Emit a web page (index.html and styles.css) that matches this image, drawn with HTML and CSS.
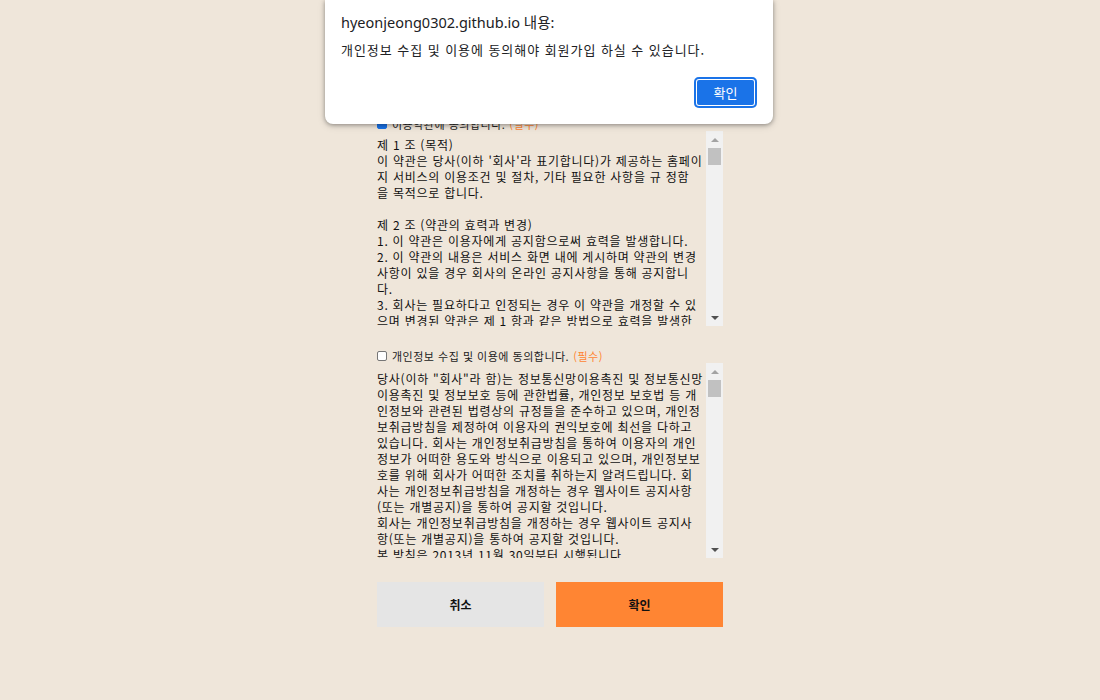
FILE: index.html
```html
<!DOCTYPE html>
<html lang="ko">
<head>
<meta charset="utf-8">
<title>회원가입 약관 동의</title>
<link rel="stylesheet" href="styles.css">
</head>
<body>
<main class="page">
  <section class="agree">
    <label class="agree-label">
      <span class="check check-on"></span>
      <span>이용약관에 동의합니다.</span>
      <span class="req">(필수)</span>
    </label>
    <div class="scroll-box">
      <div class="scroll-text scroll-text-a">제 1 조 (목적)<br>이 약관은 당사(이하 '회사'라 표기합니다)가 제공하는 홈페이<br>지 서비스의 이용조건 및 절차, 기타 필요한 사항을 규 정함<br>을 목적으로 합니다.<br><br>제 2 조 (약관의 효력과 변경)<br>1. 이 약관은 이용자에게 공지함으로써 효력을 발생합니다.<br>2. 이 약관의 내용은 서비스 화면 내에 게시하며 약관의 변경<br>사항이 있을 경우 회사의 온라인 공지사항을 통해 공지합니<br>다.<br>3. 회사는 필요하다고 인정되는 경우 이 약관을 개정할 수 있<br>으며 변경된 약관은 제 1 항과 같은 방법으로 효력을 발생한<br>다.</div>
      <div class="scrollbar">
        <div class="sb-btn"><span class="arrow-up"></span></div>
        <div class="sb-track"><div class="sb-thumb"></div></div>
        <div class="sb-btn"><span class="arrow-down"></span></div>
      </div>
    </div>
  </section>

  <section class="agree">
    <label class="agree-label">
      <span class="check"></span>
      <span>개인정보 수집 및 이용에 동의합니다.</span>
      <span class="req">(필수)</span>
    </label>
    <div class="scroll-box">
      <div class="scroll-text scroll-text-b">당사(이하 "회사"라 함)는 정보통신망이용촉진 및 정보통신망<br>이용촉진 및 정보보호 등에 관한법률, 개인정보 보호법 등 개<br>인정보와 관련된 법령상의 규정들을 준수하고 있으며, 개인정<br>보취급방침을 제정하여 이용자의 권익보호에 최선을 다하고<br>있습니다. 회사는 개인정보취급방침을 통하여 이용자의 개인<br>정보가 어떠한 용도와 방식으로 이용되고 있으며, 개인정보보<br>호를 위해 회사가 어떠한 조치를 취하는지 알려드립니다. 회<br>사는 개인정보취급방침을 개정하는 경우 웹사이트 공지사항<br>(또는 개별공지)을 통하여 공지할 것입니다.<br>회사는 개인정보취급방침을 개정하는 경우 웹사이트 공지사<br>항(또는 개별공지)을 통하여 공지할 것입니다.<br>본 방침은 2013년 11월 30일부터 시행됩니다.</div>
      <div class="scrollbar">
        <div class="sb-btn"><span class="arrow-up"></span></div>
        <div class="sb-track"><div class="sb-thumb"></div></div>
        <div class="sb-btn"><span class="arrow-down"></span></div>
      </div>
    </div>
  </section>

  <div class="actions">
    <button class="btn btn-cancel" type="button">취소</button>
    <button class="btn btn-ok" type="button">확인</button>
  </div>
</main>

<div class="alert" role="alertdialog">
  <div class="alert-title">hyeonjeong0302.github.io 내용:</div>
  <div class="alert-msg">개인정보 수집 및 이용에 동의해야 회원가입 하실 수 있습니다.</div>
  <div class="alert-actions">
    <button class="alert-btn" type="button">확인</button>
  </div>
</div>
</body>
</html>
```

FILE: styles.css
```css
html, body {
  margin: 0;
  padding: 0;
}

body {
  background: #efe6da;
  font-family: "Noto Sans CJK KR", "Noto Sans", sans-serif;
  color: #111;
  height: 700px;
  overflow: hidden;
}

.page {
  width: 346px;
  margin: 0 auto;
  padding-top: 117px;
  display: flex;
  flex-direction: column;
  gap: 18px;
}

.agree {
  display: flex;
  flex-direction: column;
}

.agree + .agree {
  margin-top: 5px;
}

.agree-label {
  display: flex;
  align-items: center;
  gap: 4px;
  height: 14px;
  font-size: 11px;
  line-height: 14px;
  letter-spacing: 0.5px;
  color: #222;
}

.check {
  width: 8px;
  height: 8px;
  border: 1px solid #767676;
  border-radius: 2px;
  background: #fff;
  margin-right: 1px;
}

.check-on {
  background: #1a73e8;
  border-color: #1a73e8;
}

.req {
  color: #ff8533;
}

.scroll-box {
  display: flex;
  height: 195px;
}

.scroll-text {
  flex: 1;
  overflow: hidden;
  font-size: 12px;
  line-height: 16px;
  letter-spacing: 0.75px;
  white-space: nowrap;
  color: #111;
}

.scroll-text-a {
  padding-top: 6px;
}

.scroll-text-b {
  padding-top: 8px;
}

.scrollbar {
  width: 17px;
  background: #f1f1f1;
  display: flex;
  flex-direction: column;
}

.sb-btn {
  height: 17px;
  display: flex;
  align-items: center;
  justify-content: center;
}

.arrow-up {
  width: 0;
  height: 0;
  border-left: 4px solid transparent;
  border-right: 4px solid transparent;
  border-bottom: 4px solid #a3a3a3;
}

.arrow-down {
  width: 0;
  height: 0;
  border-left: 4px solid transparent;
  border-right: 4px solid transparent;
  border-top: 4px solid #505050;
}

.sb-track {
  flex: 1;
  padding: 0 2px;
}

.sb-thumb {
  height: 17px;
  background: #c1c1c1;
}

.actions {
  display: flex;
  gap: 12px;
  margin-top: 6px;
}

.btn {
  flex: 1;
  height: 45px;
  border: none;
  font-family: "Noto Sans CJK KR", sans-serif;
  font-size: 12px;
  font-weight: 700;
  color: #111;
  padding: 0;
}

.btn-cancel {
  background: #e5e5e5;
}

.btn-ok {
  background: #ff8533;
}

/* browser alert dialog overlay */
.alert {
  position: absolute;
  top: 0;
  left: calc(50% - 225px);
  width: 448px;
  box-sizing: border-box;
  padding: 12px 16px 16px;
  background: #fff;
  border-radius: 0 0 8px 8px;
  box-shadow: 0 1px 4px rgba(0, 0, 0, 0.35), 0 2px 8px rgba(0, 0, 0, 0.12);
  font-family: "Noto Sans", "Noto Sans CJK KR", sans-serif;
  color: #202124;
}

.alert-title {
  font-size: 14.5px;
  line-height: 20px;
}

.alert-msg {
  margin-top: 9px;
  font-size: 13px;
  line-height: 18px;
  letter-spacing: 0.95px;
  font-family: "Noto Sans CJK KR", sans-serif;
}

.alert-actions {
  display: flex;
  justify-content: flex-end;
  margin-top: 18px;
}

.alert-btn {
  width: 63px;
  height: 31px;
  border: none;
  border-radius: 5px;
  background: #1a73e8;
  box-shadow: inset 0 0 0 2px #1a73e8, inset 0 0 0 3px #fff;
  color: #fff;
  font-family: "Noto Sans CJK KR", sans-serif;
  font-size: 13px;
  padding: 0;
}
```
